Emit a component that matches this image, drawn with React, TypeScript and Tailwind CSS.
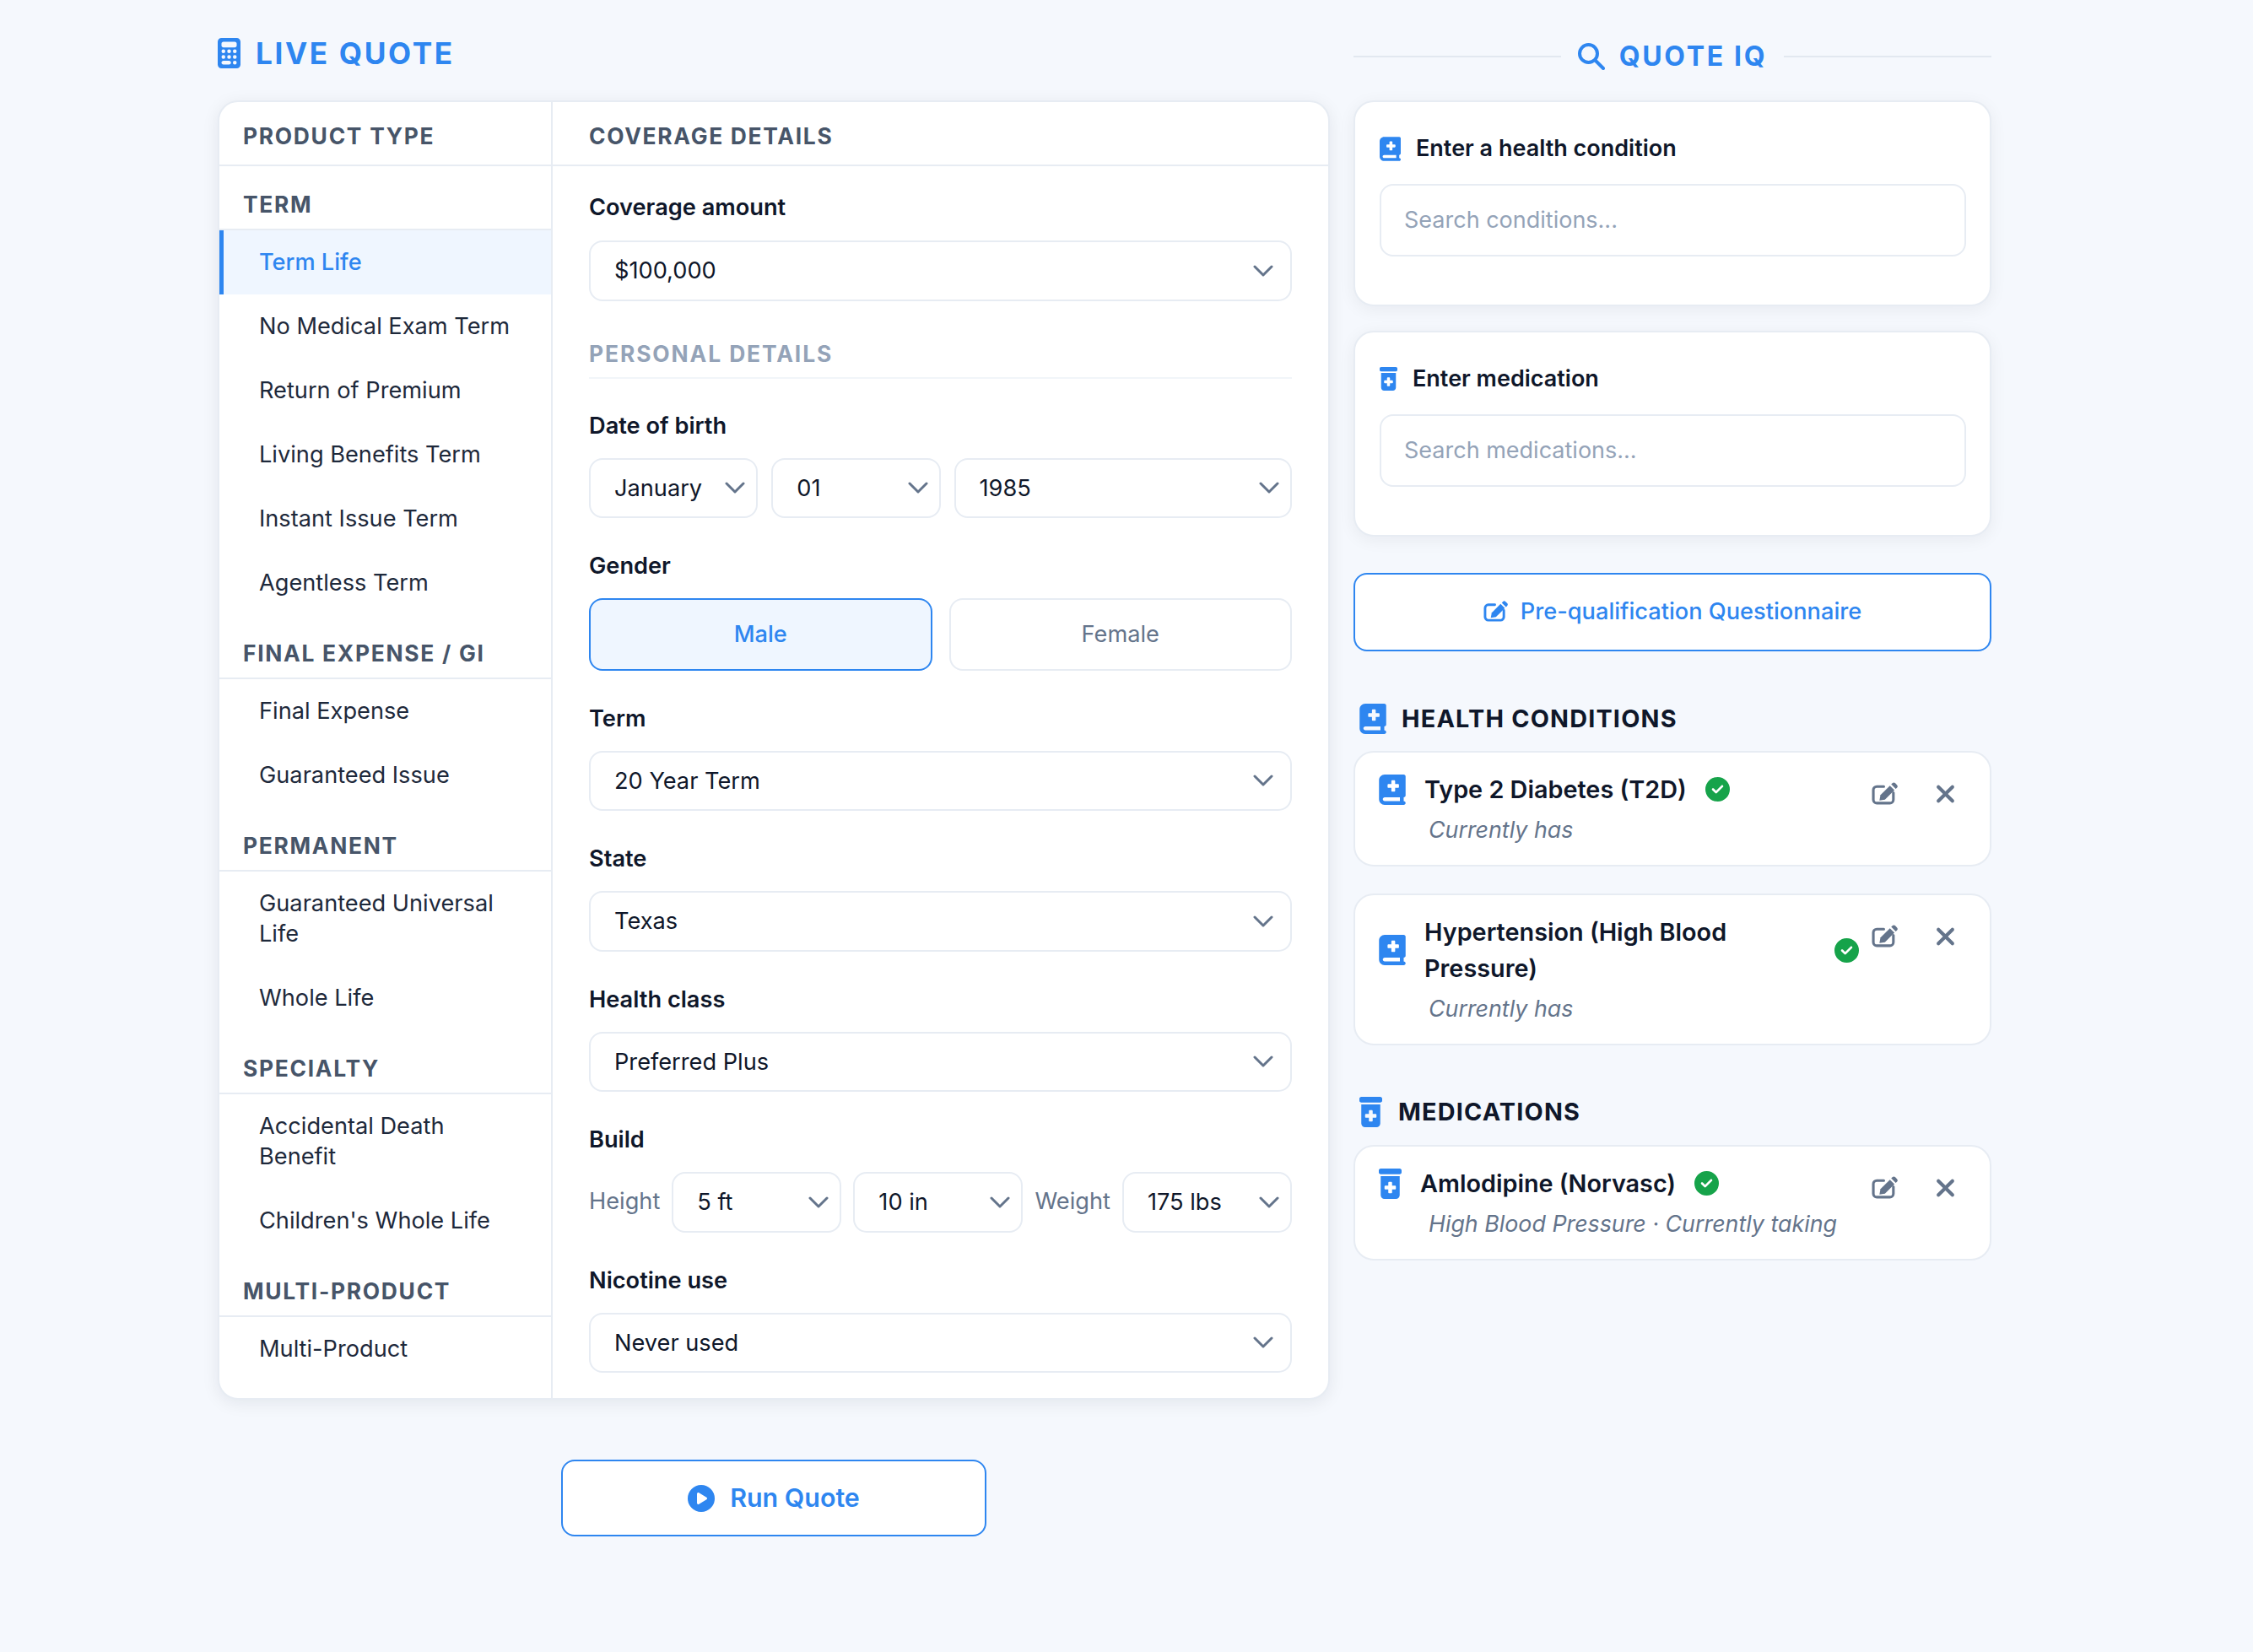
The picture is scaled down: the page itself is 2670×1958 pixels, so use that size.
import { ReactNode } from 'react'
import {
  FaBookMedical,
  FaCalculator,
  FaCircleCheck,
  FaCirclePlay,
  FaPrescriptionBottleMedical,
  FaXmark,
} from 'react-icons/fa6'

const groups = [
  { title: 'TERM', items: ['Term Life', 'No Medical Exam Term', 'Return of Premium', 'Living Benefits Term', 'Instant Issue Term', 'Agentless Term'] },
  { title: 'FINAL EXPENSE / GI', items: ['Final Expense', 'Guaranteed Issue'] },
  { title: 'PERMANENT', items: ['Guaranteed Universal Life', 'Whole Life'] },
  { title: 'SPECIALTY', items: ['Accidental Death Benefit', "Children's Whole Life"] },
  { title: 'MULTI-PRODUCT', items: ['Multi-Product'] },
]

const sectionTitle = 'text-[26.4px] font-bold tracking-[1.7px]'

function Chevron({ wide }: { wide?: boolean }) {
  return (
    <svg
      viewBox="0 0 24 14"
      className={`absolute top-1/2 h-[14px] w-[24px] -translate-y-1/2 text-[#64748b] ${wide ? 'right-[20px]' : 'right-[13px]'}`}
      fill="none"
      stroke="currentColor"
      strokeWidth="3"
      strokeLinecap="round"
      strokeLinejoin="round"
    >
      <path d="M2 2l10 10L22 2" />
    </svg>
  )
}

function EditIcon({ className }: { className: string }) {
  return (
    <svg viewBox="0 0 30 30" className={className} fill="currentColor">
      <path d="M14 6H6a4 4 0 0 0-4 4v11a4 4 0 0 0 4 4h15a4 4 0 0 0 4-4v-8" fill="none" stroke="currentColor" strokeWidth="3" strokeLinecap="round" />
      <path d="M9 22l1.2-6.2L21 5l5.2 5.2L15.3 21z" />
      <path d="M22.5 3.5l1.3-1.3a2.4 2.4 0 0 1 3.4 0l1.8 1.8a2.4 2.4 0 0 1 0 3.4l-1.3 1.3z" />
    </svg>
  )
}

function SearchIcon({ className }: { className: string }) {
  return (
    <svg viewBox="0 0 32 32" className={className} fill="none" stroke="currentColor" strokeWidth="4" strokeLinecap="round">
      <circle cx="12.5" cy="12.5" r="10.5" />
      <path d="M20.5 20.5L30 30" />
    </svg>
  )
}

function Select({ value, wide, className = '' }: { value: string; wide?: boolean; className?: string }) {
  return (
    <div className={`relative flex h-[71.5px] items-center rounded-[16px] border-2 border-[#e7ecf3] bg-white pt-[2px] pl-[28px] text-[27.2px] text-[#0f172a] ${className}`}>
      {value}
      <Chevron wide={wide} />
    </div>
  )
}

function Label({ children }: { children: ReactNode }) {
  return <div className="mb-[21px] h-[36px] pt-[1px] text-[27.2px] leading-[36px] font-semibold text-[#0f172a]">{children}</div>
}

function Field({ label, children }: { label: string; children: ReactNode }) {
  return (
    <div className="mb-[38px]">
      <Label>{label}</Label>
      {children}
    </div>
  )
}

function Sidebar() {
  return (
    <div className="w-[395px] shrink-0 border-r-2 border-[#e7ecf3] pb-[18px]">
      <div className={`h-[76px] border-b-2 border-[#e7ecf3] pt-[22px] pl-[28px] leading-[36px] text-[#475569] ${sectionTitle}`}>
        PRODUCT TYPE
      </div>
      {groups.map((g) => (
        <div key={g.title}>
          <div className={`border-b-2 border-[#e7ecf3] pt-[27px] pb-[11px] pl-[28px] leading-[36px] text-[#475569] ${sectionTitle}`}>
            {g.title}
          </div>
          {g.items.map((item) =>
            item === 'Term Life' ? (
              <div key={item} className="border-l-[5px] border-[#2e86f0] bg-[#eff6ff] py-[20px] pr-[32px] pl-[42px] text-[27.2px] leading-[36px] font-medium text-[#2e86f0]">
                {item}
              </div>
            ) : (
              <div key={item} className="py-[20px] pr-[32px] pl-[47px] text-[27.2px] leading-[36px] text-[#1e293b]">
                {item}
              </div>
            ),
          )}
        </div>
      ))}
    </div>
  )
}

function Details() {
  return (
    <div className="min-w-0 flex-1 pb-[30px]">
      <div className={`h-[76px] border-b-2 border-[#e7ecf3] pt-[22px] pl-[43px] leading-[36px] text-[#475569] ${sectionTitle}`}>
        COVERAGE DETAILS
      </div>
      <div className="pt-[30px] pr-[43px] pl-[43px]">
        <div className="mb-[44px]">
          <div className="mb-[22px] h-[36px] pt-[1px] text-[27.2px] leading-[36px] font-semibold text-[#0f172a]">Coverage amount</div>
          <Select value="$100,000" wide />
        </div>
        <div className="mb-[37px] border-b-2 border-[#f1f5f9] pb-[10px] text-[26.4px] leading-[36px] font-bold tracking-[1.9px] text-[#94a3b8]">
          PERSONAL DETAILS
        </div>
        <Field label="Date of birth">
          <div className="grid grid-cols-[1fr_1fr_2fr] gap-[16px]">
            <Select value="January" />
            <Select value="01" />
            <Select value="1985" />
          </div>
        </Field>
        <Field label="Gender">
          <div className="grid grid-cols-2 gap-[20px]">
            <div className="flex h-[85.5px] items-center justify-center rounded-[16px] border-2 border-[#2e86f0] bg-[#eff6ff] pt-[2px] text-[27.2px] font-medium text-[#2e86f0]">Male</div>
            <div className="flex h-[85.5px] items-center justify-center rounded-[16px] border-2 border-[#e7ecf3] bg-white pt-[2px] text-[27.2px] text-[#64748b]">Female</div>
          </div>
        </Field>
        <Field label="Term">
          <Select value="20 Year Term" wide />
        </Field>
        <Field label="State">
          <Select value="Texas" wide />
        </Field>
        <Field label="Health class">
          <Select value="Preferred Plus" wide />
        </Field>
        <Field label="Build">
          <div className="flex items-center gap-[14px] text-[27.2px] text-[#64748b]">
            <span>Height</span>
            <Select value="5 ft" className="flex-1" />
            <Select value="10 in" className="flex-1" />
            <span>Weight</span>
            <Select value="175 lbs" className="flex-1" />
          </div>
        </Field>
        <div>
          <Label>Nicotine use</Label>
          <Select value="Never used" wide />
        </div>
      </div>
    </div>
  )
}

function SearchCard({ icon, title, placeholder }: { icon: ReactNode; title: string; placeholder: string }) {
  return (
    <div className="rounded-[24px] border-2 border-[#e7ecf3] bg-white pt-[37px] pr-[28px] pb-[57px] pl-[29px] shadow-[0_4px_20px_rgba(15,23,42,0.06)]">
      <div className="mb-[24px] flex h-[36px] items-center gap-[18px] text-[27px] font-semibold text-[#0f172a]">
        {icon}
        {title}
      </div>
      <div className="flex h-[86px] items-center rounded-[16px] border-2 border-[#e7ecf3] pt-[1px] pl-[27px] text-[27px] text-[#94a3b8]">{placeholder}</div>
    </div>
  )
}

function EntryCard({ icon, title, sub }: { icon: ReactNode; title: string; sub: string }) {
  return (
    <div className="relative rounded-[24px] border-2 border-[#e7ecf3] bg-white pt-[22px] pr-[28px] pb-[23px] pl-[28px]">
      <div className="mr-[127px] flex items-center gap-[22px]">
        {icon}
        <div className="text-[28.8px] leading-[43px] font-semibold text-[#0f172a]">{title}</div>
        <FaCircleCheck className="h-[29px] w-[29px] shrink-0 text-[#16a34a]" />
      </div>
      <div className="mt-[8px] pb-[1px] pl-[59px] text-[26.8px] leading-[36px] text-[#64748b] italic">{sub}</div>
      <div className="absolute top-[32px] right-[40px] flex items-center gap-[44px] text-[#64748b]">
        <EditIcon className="h-[31px] w-[31px]" />
        <FaXmark className="h-[34px] w-[25px]" />
      </div>
    </div>
  )
}

export default function App() {
  const blue = 'text-[#2e86f0]'
  const heading = 'flex h-[43px] items-center pl-[7px] text-[28.8px] font-bold tracking-[1.2px] text-[#0f172a]'
  return (
    <div className="flex min-h-screen items-start gap-[28px] bg-[#f5f8fd] pl-[258px] font-[Inter,sans-serif]">
      <div className="w-[1318px] shrink-0">
        <div className={`mt-[38px] mb-[31px] flex h-[50px] items-center gap-[18px] text-[35.2px] font-bold tracking-[2.6px] ${blue}`}>
          <FaCalculator className="h-[36px] w-[27px]" />
          LIVE QUOTE
        </div>
        <div className="flex rounded-[24px] border-2 border-[#e7ecf3] bg-white shadow-[0_4px_20px_rgba(15,23,42,0.08)]">
          <Sidebar />
          <Details />
        </div>
        <button className={`mx-auto mt-[71px] flex h-[91px] w-[504px] items-center justify-center gap-[18px] rounded-[16px] border-2 border-[#2e86f0] bg-white text-[30.4px] font-semibold ${blue}`}>
          <FaCirclePlay className="h-[32px] w-[32px]" />
          Run Quote
        </button>
      </div>
      <div className="w-[756px] shrink-0">
        <div className={`mt-[42px] mb-[27px] flex h-[50px] items-center gap-[20px] ${blue}`}>
          <div className="h-[2px] flex-1 bg-[#e2e8f0]" />
          <div className="flex items-center gap-[17px] text-[32px] font-bold tracking-[2.7px]">
            <SearchIcon className="h-[32px] w-[32px]" />
            QUOTE IQ
          </div>
          <div className="h-[2px] flex-1 bg-[#e2e8f0]" />
        </div>
        <div className="flex flex-col gap-[29px]">
          <SearchCard icon={<FaBookMedical className={`h-[29px] w-[25px] ${blue}`} />} title="Enter a health condition" placeholder="Search conditions..." />
          <SearchCard icon={<FaPrescriptionBottleMedical className={`h-[28px] w-[21px] ${blue}`} />} title="Enter medication" placeholder="Search medications..." />
        </div>
        <button className={`mt-[43px] flex h-[93px] w-full items-center justify-center gap-[15px] rounded-[16px] border-2 border-[#2e86f0] bg-white text-[27.2px] font-medium ${blue}`}>
          <EditIcon className="h-[29px] w-[29px]" />
          Pre-qualification Questionnaire
        </button>
        <div className={`${heading} mt-[58px] mb-[17px] gap-[18px]`}>
          <FaBookMedical className={`h-[36px] w-[32px] ${blue}`} />
          HEALTH CONDITIONS
        </div>
        <div className="flex flex-col gap-[32px]">
          <EntryCard icon={<FaBookMedical className={`h-[36px] w-[32px] shrink-0 ${blue}`} />} title="Type 2 Diabetes (T2D)" sub="Currently has" />
          <EntryCard icon={<FaBookMedical className={`h-[36px] w-[32px] shrink-0 ${blue}`} />} title="Hypertension (High Blood Pressure)" sub="Currently has" />
        </div>
        <div className={`${heading} mt-[57px] mb-[18px] gap-[19px]`}>
          <FaPrescriptionBottleMedical className={`h-[36px] w-[27px] ${blue}`} />
          MEDICATIONS
        </div>
        <EntryCard icon={<FaPrescriptionBottleMedical className={`h-[36px] w-[27px] shrink-0 ${blue}`} />} title="Amlodipine (Norvasc)" sub="High Blood Pressure · Currently taking" />
      </div>
    </div>
  )
}
